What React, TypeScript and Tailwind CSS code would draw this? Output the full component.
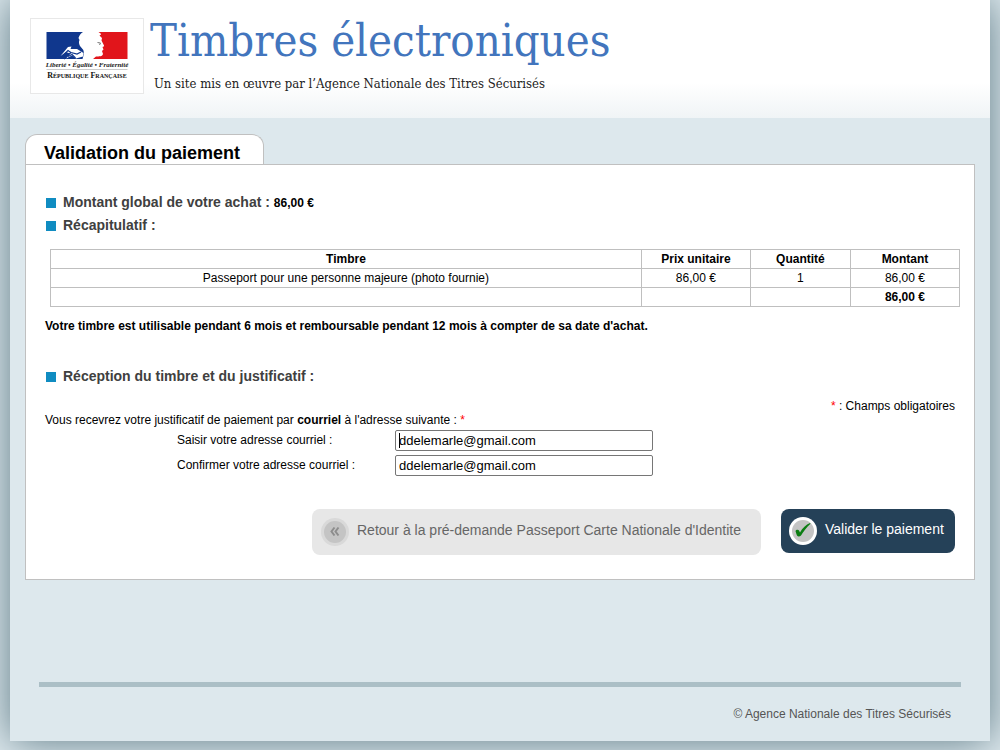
import React from "react";

const columns = [
  { label: "Timbre", width: "w-[65%]" },
  { label: "Prix unitaire", width: "w-[12%]" },
  { label: "Quantité", width: "w-[11%]" },
  { label: "Montant", width: "w-[12%]" },
];

const stamps = [
  {
    name: "Passeport pour une personne majeure (photo fournie)",
    price: "86,00 €",
    quantity: 1,
    amount: "86,00 €",
  },
];

const fields = [
  { id: "email", label: "Saisir votre adresse courriel :", focused: true },
  { id: "email-confirm", label: "Confirmer votre adresse courriel :", focused: false },
];

function Logo() {
  return (
    <svg
      width="114"
      height="76"
      viewBox="0 0 114 76"
      className="shrink-0"
      role="img"
      aria-label="République Française"
    >
      <rect x="0.5" y="0.5" width="113" height="75" fill="#fff" stroke="#e8e8e8" />
      {/* blue field */}
      <path
        d="M16.500 14H53C50.500 15.500 49 18 48.500 20L49.500 22C48.500 24 49 26 50 28L52.500 31C54.500 33 54 37 52.500 41H16.500Z"
        fill="#10378d"
      />
      {/* drapery */}
      <path
        d="M30.500 38L38 29L41.500 28.500L40.500 31L47 31L53.500 35L53 38.500L46 40.500L42 37.500L36 40.500L40 35.500L36 34Z"
        fill="#fff"
      />
      <path
        d="M32 38.500L38 32.500L41 34.500L34 41M41 34.500L47 36L51 34M38 38.500L42 36.500L45.500 40"
        fill="none"
        stroke="#10378d"
        strokeWidth="1.200"
      />
      {/* red field with the profile cut out */}
      <path
        d="M97.500 14H68.500C70 15 71 15.500 71 16.500L69.500 17.500L72 20L71.500 22.500L74 27.500C74.500 28.500 73 28.800 72.500 29L73.500 31.500L72 33L73 36C72.500 38.500 69 38.500 66 38.500L63 41H97.500Z"
        fill="#e1151b"
      />
      <path d="M67.500 24.500L70.500 25L69.500 27" fill="none" stroke="#777" strokeWidth="1" />
      <text
        x="57"
        y="49"
        textAnchor="middle"
        fontFamily="Liberation Serif, serif"
        fontStyle="italic"
        fontWeight="bold"
        fontSize="7"
        fill="#222"
      >
        Liberté • Égalité • Fraternité
      </text>
      <path d="M16.500 51.500H97.500" stroke="#ccc" />
      <text
        x="57"
        y="60"
        textAnchor="middle"
        fontFamily="Liberation Serif, serif"
        fontWeight="bold"
        fontSize="8"
        fill="#111"
      >
        R<tspan fontSize="6">ÉPUBLIQUE</tspan> F<tspan fontSize="6">RANÇAISE</tspan>
      </text>
    </svg>
  );
}

function Header() {
  return (
    <header className="flex h-[118px] items-start gap-[6px] bg-linear-to-b from-white from-70% to-[#f0f4f6] px-5 pt-[18px]">
      <Logo />
      <div className="font-['DejaVu_Serif_Condensed','DejaVu_Serif',serif]">
        <h1 className="text-[45px] leading-[46px] text-[#4275bd]">Timbres électroniques</h1>
        <p className="mt-3 px-1 text-[13px] leading-4 text-[#222]">
          Un site mis en œuvre par l’Agence Nationale des Titres Sécurisés
        </p>
      </div>
    </header>
  );
}

function SectionTitle({ children }: { children: React.ReactNode }) {
  return (
    <h3 className="flex items-center gap-[7px] pl-px text-sm leading-[23px] font-bold text-[#404040]">
      <span className="size-[10px] bg-[#108cc1]" />
      <span>{children}</span>
    </h3>
  );
}

function StampTable() {
  return (
    <table className="w-full table-fixed border-collapse text-center leading-[18px] [&_td]:h-[19px] [&_td]:border [&_td]:border-[#bfbfbf] [&_th]:h-[19px] [&_th]:border [&_th]:border-[#bfbfbf]">
      <thead>
        <tr>
          {columns.map((column) => (
            <th key={column.label} className={column.width}>
              {column.label}
            </th>
          ))}
        </tr>
      </thead>
      <tbody>
        {stamps.map((stamp) => (
          <tr key={stamp.name}>
            <td>{stamp.name}</td>
            <td>{stamp.price}</td>
            <td>{stamp.quantity}</td>
            <td>{stamp.amount}</td>
          </tr>
        ))}
        <tr>
          <td />
          <td />
          <td />
          <td className="font-bold">86,00 €</td>
        </tr>
      </tbody>
    </table>
  );
}

function Actions() {
  return (
    <div className="mt-[33px] flex items-start justify-end gap-5">
      <button
        type="button"
        className="flex h-[46px] min-w-[449px] items-center gap-2 rounded-lg bg-[#e7e7e7] px-[9px] text-sm text-[#666]"
      >
        <svg width="28" height="28" viewBox="0 0 28 28">
          <circle cx="14" cy="14" r="14" fill="#d9d9d9" />
          <circle cx="14" cy="14" r="11" fill="#c4c4c4" />
          <path
            d="M13.500 9.500L10.500 13.500L13.500 17.500M17.500 9.500L14.500 13.500L17.500 17.500"
            fill="none"
            stroke="#8d8d8d"
            strokeWidth="2"
          />
        </svg>
        <span className="pb-1">Retour à la pré-demande Passeport Carte Nationale d'Identite</span>
      </button>
      <button
        type="submit"
        className="flex h-11 min-w-[174px] items-center gap-2 rounded-lg bg-[#254158] px-2 text-sm text-white"
      >
        <svg width="28" height="28" viewBox="0 0 28 28">
          <circle cx="14" cy="14" r="14" fill="#fff" />
          <circle cx="14" cy="14" r="11" fill="#c4c4c4" />
          <path
            d="M6.500 14C7 12.500 9.500 12.500 10 13.500L11 15.500C13.500 11 17 7.500 21 6L21.500 6.800C17.500 10.500 14.500 14.500 12 18.500C11 19.800 9 20 8.200 18.800C7.500 17.500 7 15.500 6.500 14Z"
            fill="#0b7d12"
          />
        </svg>
        <span className="pb-1">Valider le paiement</span>
      </button>
    </div>
  );
}

function App() {
  return (
    <div className="flex min-h-screen flex-col overflow-hidden bg-[#dde8ed] font-['Liberation_Sans',Arial,sans-serif] text-xs text-black">
      <div className="mx-[10px] mb-[9px] flex flex-1 flex-col bg-[#dde8ed] shadow-[0_0_40px_#5b7883]">
        <Header />
        <main className="px-[15px] pt-4">
          <h2 className="w-fit min-w-[239px] rounded-t-xl border border-b-0 border-[#c0c0c0] bg-white px-[18px] pt-[7px] text-lg leading-[22px] font-bold">
            Validation du paiement
          </h2>
          <form
            className="border border-[#c0c0c0] bg-white px-[19px] pt-[26px] pb-6"
            onSubmit={(e) => e.preventDefault()}
          >
            <SectionTitle>
              Montant global de votre achat : <span className="text-xs text-black">86,00 €</span>
            </SectionTitle>
            <SectionTitle>Récapitulatif :</SectionTitle>
            <div className="mt-3 -mr-[5px] ml-[5px]">
              <StampTable />
            </div>
            <p className="mt-[11px] leading-4 font-bold">
              Votre timbre est utilisable pendant 6 mois et remboursable pendant 12 mois à compter de
              sa date d'achat.
            </p>
            <div className="mt-[31px]">
              <SectionTitle>Réception du timbre et du justificatif :</SectionTitle>
            </div>
            <p className="mt-[11px] text-right leading-[14px]">
              <span className="text-[#ff0000]">*</span> : Champs obligatoires
            </p>
            <p className="leading-[14px]">
              Vous recevrez votre justificatif de paiement par <b>courriel</b> à l'adresse suivante :{" "}
              <span className="text-[#ff0000]">*</span>
            </p>
            <div className="mt-[3px] flex flex-col gap-1 pl-[132px]">
              {fields.map((field) => (
                <div key={field.id} className="flex items-center">
                  <label htmlFor={field.id} className="w-[218px] pb-px">
                    {field.label}
                  </label>
                  <div className="relative">
                    <input
                      id={field.id}
                      type="text"
                      defaultValue="ddelemarle@gmail.com"
                      className="block h-[21px] w-[258px] rounded-xs border border-[#767676] bg-white px-[3px] text-[13px]"
                    />
                    {field.focused && (
                      <span className="absolute top-[3px] left-1 h-[15px] w-px bg-black" />
                    )}
                  </div>
                </div>
              ))}
            </div>
            <Actions />
          </form>
        </main>
        <footer className="mt-auto px-[29px] pb-[19px]">
          <hr className="border-t-[5px] border-[#abbfc6]" />
          <p className="mt-[19px] px-[10px] text-right leading-4 text-[#555]">
            © Agence Nationale des Titres Sécurisés
          </p>
        </footer>
      </div>
    </div>
  );
}

export default App;
